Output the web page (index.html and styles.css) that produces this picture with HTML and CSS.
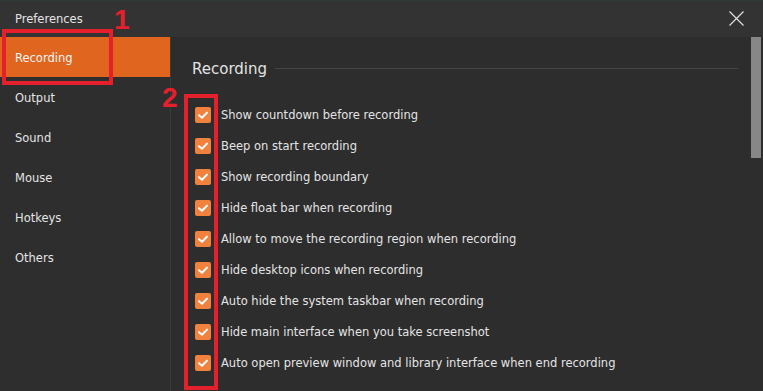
FILE: index.html
```html
<!DOCTYPE html>
<html lang="en">
<head>
  <meta charset="UTF-8" />
  <title>Preferences</title>
  <link rel="stylesheet" href="styles.css">
</head>
<body>
  <div class="window">
    <div class="titlebar">
      <span class="title">Preferences</span>
      <button class="close" aria-label="Close">
        <svg width="15" height="15" viewBox="0 0 15 15"><path d="M0.5 0.5 L14.5 14.5 M14.5 0.5 L0.5 14.5" stroke="#e0e0e0" stroke-width="1.2" fill="none"/></svg>
      </button>
    </div>

    <div class="main">
      <ul class="sidebar">
        <li class="active">Recording</li>
        <li>Output</li>
        <li>Sound</li>
        <li>Mouse</li>
        <li>Hotkeys</li>
        <li>Others</li>
      </ul>

      <div class="content">
        <div class="section-head">
          <h2>Recording</h2>
          <span class="rule"></span>
        </div>

        <div class="options">
          <label class="option"><span class="check"></span>Show countdown before recording</label>
          <label class="option"><span class="check"></span>Beep on start recording</label>
          <label class="option"><span class="check"></span>Show recording boundary</label>
          <label class="option"><span class="check"></span>Hide float bar when recording</label>
          <label class="option"><span class="check"></span>Allow to move the recording region when recording</label>
          <label class="option"><span class="check"></span>Hide desktop icons when recording</label>
          <label class="option"><span class="check"></span>Auto hide the system taskbar when recording</label>
          <label class="option"><span class="check"></span>Hide main interface when you take screenshot</label>
          <label class="option"><span class="check"></span>Auto open preview window and library interface when end recording</label>
        </div>

        <div class="scroll-thumb"></div>
      </div>
    </div>

    <!-- tutorial markers -->
    <div class="mark box-1"></div>
    <div class="mark-num num-1">1</div>
    <div class="mark box-2"></div>
    <div class="mark-num num-2">2</div>
  </div>
</body>
</html>
```

FILE: styles.css
```css
:root {
  --orange: #e0661f;
  --check: #f0823e;
  --marker: #e3202b;
  --text: #e4e4e4;
}

* {
  box-sizing: border-box;
}

body {
  margin: 0;
  background: #2d2d2d;
  font-family: 'DejaVu Sans', Verdana, sans-serif;
  font-size: 11.5px;
  color: var(--text);
}

.window {
  position: relative;
  width: 763px;
  height: 391px;
  display: flex;
  flex-direction: column;
  overflow: hidden;
  border-top: 1px solid #2b3b36;
}

.titlebar {
  height: 36px;
  flex: none;
  display: flex;
  align-items: center;
  justify-content: space-between;
  padding: 0 19px 0 15px;
  background: #333333;
}

.title {
  margin-top: -1px;
}

.close {
  background: none;
  border: none;
  padding: 0;
  width: 15px;
  height: 15px;
  margin-top: -1px;
  display: flex;
}

.main {
  flex: 1;
  display: flex;
}

.sidebar {
  width: 171px;
  flex: none;
  margin: 0;
  padding: 0;
  list-style: none;
  background: #2e2e2e;
  border-right: 1px solid #3a3a3a;
}

.sidebar li {
  height: 40px;
  line-height: 42px;
  padding-left: 15px;
}

.sidebar li.active {
  background: var(--orange);
  color: #f4f4f4;
}

.content {
  position: relative;
  flex: 1;
  padding: 20px 25px 0 21px;
  background: #2d2d2d;
}

.section-head {
  display: flex;
  align-items: center;
  gap: 8px;
  height: 24px;
  margin-bottom: 18px;
}

.section-head h2 {
  margin: 0;
  font-size: 15px;
  font-weight: normal;
  color: #e2e2e2;
}

.rule {
  flex: 1;
  height: 1px;
  margin-top: -1px;
  background: #464646;
}

.options {
  display: flex;
  flex-direction: column;
}

.option {
  height: 31px;
  display: flex;
  align-items: center;
  gap: 10px;
  padding-left: 3px;
}

.check {
  width: 16px;
  height: 16px;
  flex: none;
  border-radius: 2px;
  background: var(--check) url("data:image/svg+xml,%3Csvg xmlns='http://www.w3.org/2000/svg' width='16' height='16'%3E%3Cpath d='M4 8.2 L7 10.8 L12 5.6' stroke='white' stroke-width='2' fill='none' stroke-linecap='round' stroke-linejoin='round'/%3E%3C/svg%3E") no-repeat center;
}

.scroll-thumb {
  position: absolute;
  top: 0;
  right: 2px;
  width: 10px;
  height: 121px;
  background: #878787;
}

.mark {
  position: absolute;
  border: 4px solid var(--marker);
}

.box-1 {
  left: 2px;
  top: 28px;
  width: 111px;
  height: 56px;
}

.box-2 {
  left: 184px;
  top: 93px;
  width: 34px;
  height: 296px;
}

.mark-num {
  position: absolute;
  font-family: 'Liberation Sans', Arial, sans-serif;
  font-weight: bold;
  font-size: 28px;
  line-height: 1;
  color: var(--marker);
}

.num-1 {
  left: 114px;
  top: 5px;
}

.num-2 {
  left: 162px;
  top: 83px;
}
```
